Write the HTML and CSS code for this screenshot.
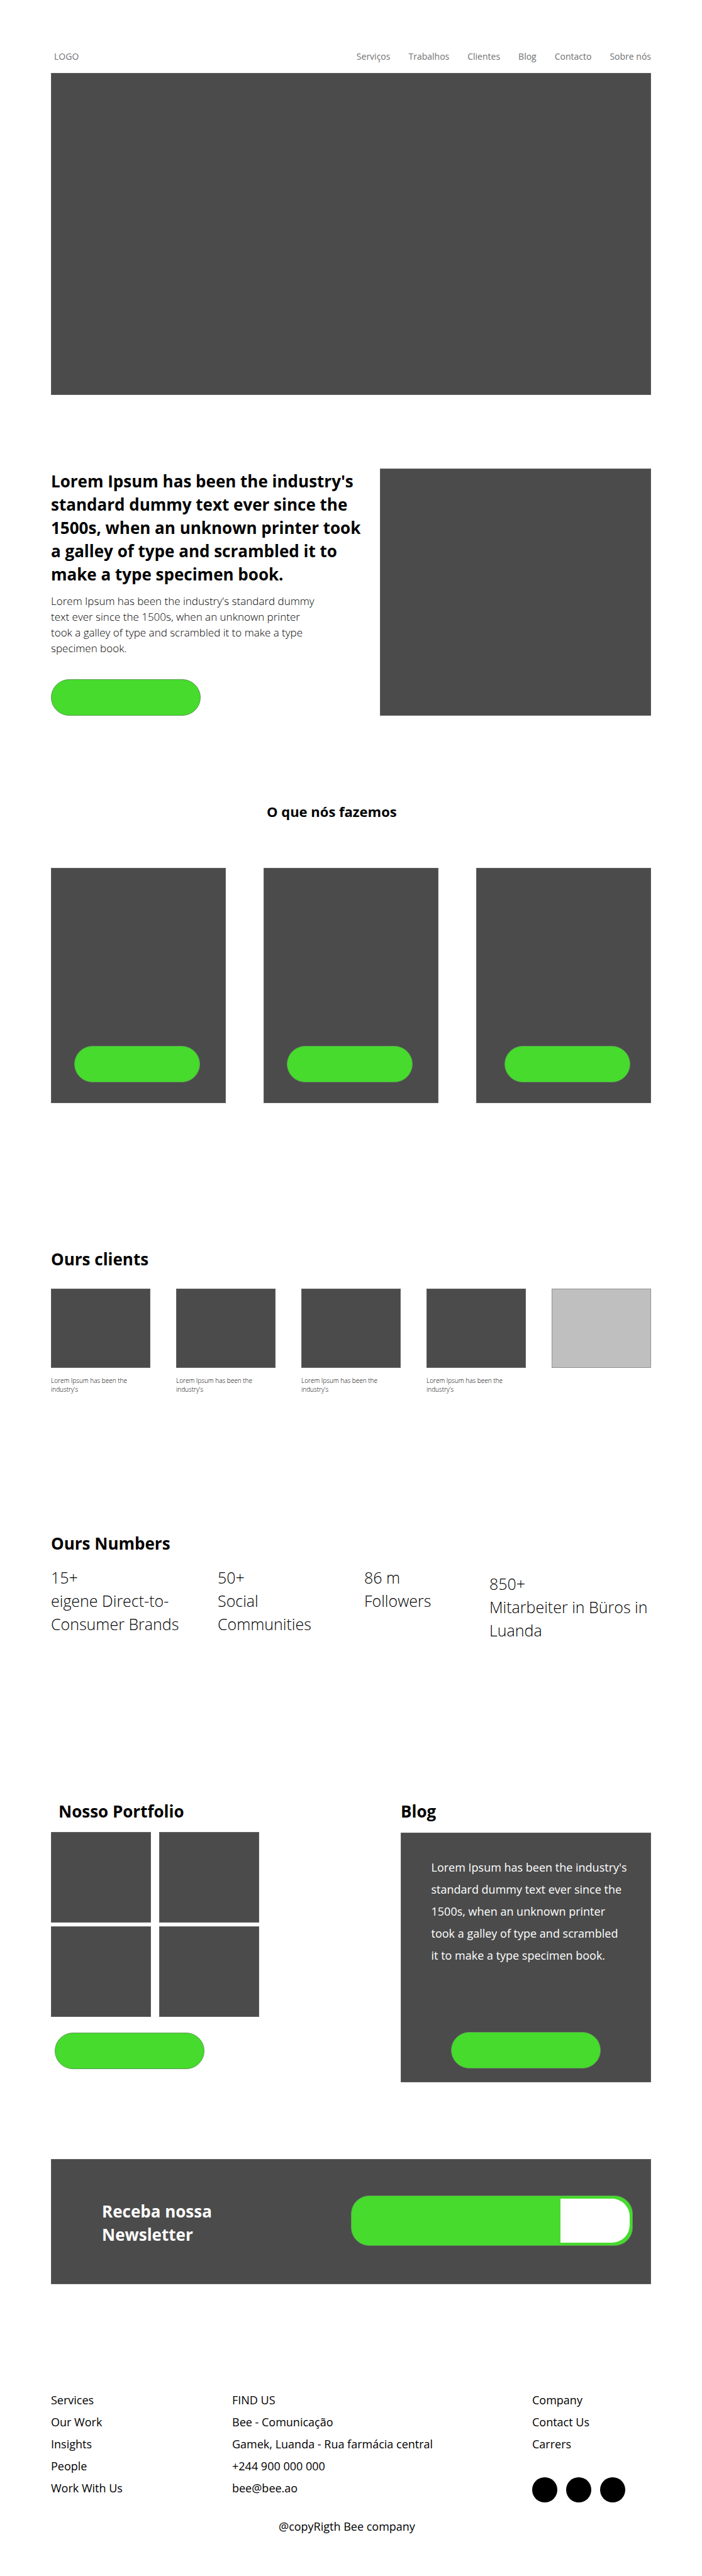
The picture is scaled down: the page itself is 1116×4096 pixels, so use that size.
FILE: index.html
```html
<!DOCTYPE html>
<html lang="pt">
<head>
<meta charset="utf-8">
<meta name="viewport" content="width=device-width, initial-scale=1">
<title>Bee - Comunicação</title>
<link rel="stylesheet" href="styles.css">
</head>
<body>
<header class="header">
  <a class="logo" href="#">LOGO</a>
  <nav class="nav">
    <a href="#servicos">Serviços</a>
    <a href="#trabalhos">Trabalhos</a>
    <a href="#clientes">Clientes</a>
    <a href="#blog">Blog</a>
    <a href="#contacto">Contacto</a>
    <a href="#sobre">Sobre nós</a>
  </nav>
</header>
<main>
  <div class="block hero"></div>

  <section class="intro" id="sobre">
    <div class="intro-text">
      <h1 class="title">Lorem Ipsum has been the industry's<br>standard dummy text ever since the<br>1500s, when an unknown printer took<br>a galley of type and scrambled it to<br>make a type specimen book.</h1>
      <p class="lead">Lorem Ipsum has been the industry's standard dummy<br>text ever since the 1500s, when an unknown printer<br>took a galley of type and scrambled it to make a type<br>specimen book.</p>
      <button class="pill" type="button" aria-label="Saber mais"></button>
    </div>
    <div class="block intro-image"></div>
  </section>

  <section class="services" id="servicos">
    <h2 class="services-title">O que nós fazemos</h2>
    <div class="cards">
      <article class="block card"><button class="pill" type="button" aria-label="Ver serviço 1"></button></article>
      <article class="block card"><button class="pill" type="button" aria-label="Ver serviço 2"></button></article>
      <article class="block card card-last"><button class="pill" type="button" aria-label="Ver serviço 3"></button></article>
    </div>
  </section>

  <section class="clients" id="clientes">
    <h2 class="title">Ours clients</h2>
    <div class="client-list">
      <figure class="client"><div class="block client-image"></div><figcaption>Lorem Ipsum has been the<br>industry's</figcaption></figure>
      <figure class="client"><div class="block client-image"></div><figcaption>Lorem Ipsum has been the<br>industry's</figcaption></figure>
      <figure class="client"><div class="block client-image"></div><figcaption>Lorem Ipsum has been the<br>industry's</figcaption></figure>
      <figure class="client"><div class="block client-image"></div><figcaption>Lorem Ipsum has been the<br>industry's</figcaption></figure>
      <figure class="client"><div class="block client-image client-empty"></div></figure>
    </div>
  </section>

  <section class="numbers">
    <h2 class="title">Ours Numbers</h2>
    <div class="number-list">
      <p>15+<br>eigene Direct-to-<br>Consumer Brands</p>
      <p>50+<br>Social<br>Communities</p>
      <p>86 m<br>Followers</p>
      <p class="number-last">850+<br>Mitarbeiter in Büros in<br>Luanda</p>
    </div>
  </section>

  <div class="work">
    <section class="portfolio" id="trabalhos">
      <h2 class="title portfolio-title">Nosso Portfolio</h2>
      <div class="tiles">
        <div class="block tile"></div>
        <div class="block tile"></div>
        <div class="block tile"></div>
        <div class="block tile"></div>
      </div>
      <button class="pill" type="button" aria-label="Ver portfolio"></button>
    </section>
    <section class="blog" id="blog">
      <h2 class="title">Blog</h2>
      <article class="block post">
        <p>Lorem Ipsum has been the industry's<br>standard dummy text ever since the<br>1500s, when an unknown printer<br>took a galley of type and scrambled<br>it to make a type specimen book.</p>
        <button class="pill" type="button" aria-label="Ler o blog"></button>
      </article>
    </section>
  </div>

  <section class="block newsletter">
    <h2 class="title">Receba nossa<br>Newsletter</h2>
    <form class="signup">
      <input type="email" aria-label="E-mail">
      <button type="submit" aria-label="Subscrever"></button>
    </form>
  </section>
</main>
<footer class="footer" id="contacto">
  <div class="footer-columns">
    <nav class="footer-column">
      <a href="#">Services</a>
      <a href="#">Our Work</a>
      <a href="#">Insights</a>
      <a href="#">People</a>
      <a href="#">Work With Us</a>
    </nav>
    <address class="footer-column">
      <span>FIND US</span>
      <span>Bee - Comunicação</span>
      <span>Gamek, Luanda - Rua farmácia central</span>
      <a href="tel:+244900000000">+244 900 000 000</a>
      <a href="mailto:bee@bee.ao">bee@bee.ao</a>
    </address>
    <nav class="footer-column">
      <a href="#">Company</a>
      <a href="#">Contact Us</a>
      <a href="#">Carrers</a>
      <div class="social">
        <a href="#" aria-label="Facebook"></a>
        <a href="#" aria-label="Instagram"></a>
        <a href="#" aria-label="LinkedIn"></a>
      </div>
    </nav>
  </div>
  <p class="copyright">@copyRigth Bee company</p>
</footer>
</body>
</html>
```
FILE: styles.css
```css
*, *::before, *::after { box-sizing: border-box; }

body {
  margin: 0;
  padding: 0 81px 60px;
  background: #fff;
  color: #000;
  font-family: "Open Sans", "Noto Sans", sans-serif;
  font-size: 18px;
  line-height: 35px;
}

h1, h2, p, figure { margin: 0; }
a { color: inherit; text-decoration: none; }

.block { background: #4b4b4b; border: 1px solid #606060; }

.title { font-size: 26px; font-weight: 700; line-height: 37px; }

.pill {
  width: 238px;
  height: 58px;
  padding: 0;
  border: 1px solid #5d9d54;
  border-radius: 29px;
  background: #46db2d;
}

/* Header */
.header {
  display: flex;
  justify-content: space-between;
  padding: 78px 0 14px 5px;
  color: #707070;
  font-size: 14px;
  line-height: 24px;
}
.nav { display: flex; gap: 29px; }

.hero { height: 512px; }

/* Intro */
.intro {
  display: flex;
  justify-content: space-between;
  margin-top: 117px;
}
.intro-text {
  display: flex;
  flex-direction: column;
  align-items: flex-start;
  padding-top: 2px;
  white-space: nowrap;
}
.lead {
  margin-top: 11px;
  font-size: 17px;
  font-weight: 300;
  line-height: 25px;
}
.intro-text .pill { margin-top: auto; }
.intro-image { width: 431px; height: 393px; }

/* Services */
.services { margin-top: 137px; }
.services-title {
  padding-left: 343px;
  font-size: 22px;
  line-height: 30px;
}
.cards {
  display: grid;
  grid-template-columns: repeat(3, 1fr);
  gap: 60px;
  margin-top: 75px;
}
.card {
  display: flex;
  align-items: flex-end;
  height: 374px;
  padding: 0 36px 32px;
}
.card .pill { width: 200px; }
.card-last { justify-content: flex-end; padding-right: 32px; }

/* Clients */
.clients { margin-top: 230px; }
.client-list {
  display: grid;
  grid-template-columns: repeat(5, 1fr);
  gap: 41px;
  margin-top: 28px;
}
.client-image { height: 126px; }
.client-empty { background: #bfbfbf; border-color: #909090; }
.client figcaption {
  margin-top: 13px;
  font-size: 10px;
  font-weight: 300;
  line-height: 14px;
}

/* Numbers */
.numbers { margin-top: 220px; }
.number-list {
  display: grid;
  grid-template-columns: 265fr 233fr 199fr 257fr;
  margin-top: 17px;
  font-size: 25px;
  font-weight: 300;
  line-height: 37px;
  white-space: nowrap;
}
.number-last { padding-top: 10px; }

/* Portfolio and blog */
.work {
  display: flex;
  justify-content: space-between;
  margin-top: 251px;
}
.portfolio-title { padding-left: 12px; }
.tiles {
  display: grid;
  grid-template-columns: repeat(2, 159px);
  gap: 6px 13px;
  margin-top: 14px;
}
.tile { height: 144px; }
.portfolio .pill { display: block; margin: 25px 0 0 6px; }
.blog { width: 398px; }
.post {
  display: flex;
  flex-direction: column;
  justify-content: space-between;
  align-items: center;
  height: 397px;
  margin-top: 15px;
  padding: 37px 0 21px;
  color: #fff;
  white-space: nowrap;
}
.post p { width: 301px; }

/* Newsletter */
.newsletter {
  display: flex;
  justify-content: space-between;
  align-items: center;
  height: 199px;
  margin-top: 122px;
  padding: 0 28px 0 80px;
}
.newsletter .title { margin-top: 4px; color: #fff; }
.signup {
  display: flex;
  width: 448px;
  height: 80px;
  margin-bottom: 4px;
  padding: 4px;
  border: 1px solid #5d9d54;
  border-radius: 29px;
  background: #46db2d;
}
.signup input {
  flex: 1;
  min-width: 0;
  padding: 0 24px;
  border: 0;
  background: transparent;
  font: inherit;
}
.signup button {
  width: 110px;
  padding: 0;
  border: 0;
  border-radius: 0 28px 28px 0;
  background: #fff;
}

/* Footer */
.footer { margin-top: 167px; }
.footer-columns {
  display: grid;
  grid-template-columns: 288fr 477fr 189fr;
}
.footer-column {
  display: flex;
  flex-direction: column;
  align-items: flex-start;
  font-style: normal;
}
.social { display: flex; gap: 14px; margin-top: 35px; }
.social a {
  width: 40px;
  height: 40px;
  border-radius: 50%;
  background: #000;
}
.copyright { margin-top: 21px; padding-left: 362px; }
```
